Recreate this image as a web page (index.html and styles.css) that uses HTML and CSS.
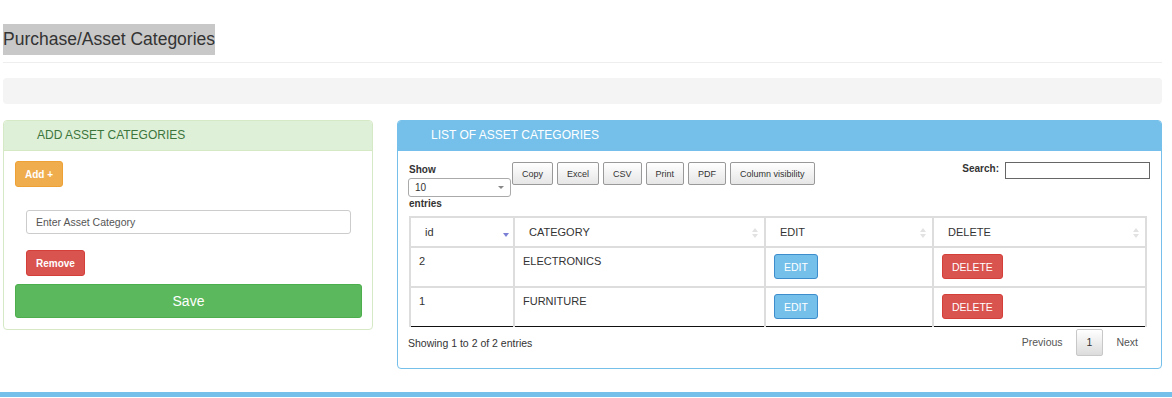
FILE: index.html
```html
<!DOCTYPE html>
<html lang="en">
<head>
    <meta charset="UTF-8">
    <meta name="viewport" content="width=device-width, initial-scale=1.0">
    <title>Purchase/Asset Categories</title>
    <link rel="stylesheet" href="styles.css">
</head>
<body>
    <div class="page">
        <h1 class="page-title"><span>Purchase/Asset Categories</span></h1>
        <hr class="divider">
        <div class="well"></div>

        <div class="panels">
            <div class="panel panel-success">
                <div class="panel-heading">ADD ASSET CATEGORIES</div>
                <div class="panel-body">
                    <button class="btn btn-warning btn-small">Add +</button>
                    <div class="field-group">
                        <input type="text" class="form-input" placeholder="Enter Asset Category">
                        <button class="btn btn-danger btn-small">Remove</button>
                    </div>
                    <button class="btn btn-success btn-block">Save</button>
                </div>
            </div>

            <div class="panel panel-info">
                <div class="panel-heading">LIST OF ASSET CATEGORIES</div>
                <div class="panel-body">
                    <div class="dt-toolbar">
                        <div class="dt-length">
                            <label>Show</label>
                            <div class="select-box">10 <span class="caret"></span></div>
                            <label>entries</label>
                        </div>
                        <div class="dt-buttons">
                            <button class="dt-button">Copy</button>
                            <button class="dt-button">Excel</button>
                            <button class="dt-button">CSV</button>
                            <button class="dt-button">Print</button>
                            <button class="dt-button">PDF</button>
                            <button class="dt-button">Column visibility</button>
                        </div>
                        <div class="dt-search">
                            <label>Search:</label>
                            <input type="search" class="search-input">
                        </div>
                    </div>

                    <table class="dt-table">
                        <thead>
                            <tr>
                                <th class="col-id"><div class="th-inner">id <span class="sort-desc"></span></div></th>
                                <th class="col-cat"><div class="th-inner">CATEGORY <span class="sort-both"></span></div></th>
                                <th class="col-edit"><div class="th-inner">EDIT <span class="sort-both"></span></div></th>
                                <th class="col-del"><div class="th-inner">DELETE <span class="sort-both"></span></div></th>
                            </tr>
                        </thead>
                        <tbody>
                            <tr>
                                <td>2</td>
                                <td>ELECTRONICS</td>
                                <td><button class="btn btn-info btn-row">EDIT</button></td>
                                <td><button class="btn btn-danger btn-row">DELETE</button></td>
                            </tr>
                            <tr>
                                <td>1</td>
                                <td>FURNITURE</td>
                                <td><button class="btn btn-info btn-row">EDIT</button></td>
                                <td><button class="btn btn-danger btn-row">DELETE</button></td>
                            </tr>
                        </tbody>
                    </table>

                    <div class="dt-footer">
                        <div class="dt-info">Showing 1 to 2 of 2 entries</div>
                        <div class="pagination">
                            <span class="page-link">Previous</span>
                            <span class="page-link current">1</span>
                            <span class="page-link">Next</span>
                        </div>
                    </div>
                </div>
            </div>
        </div>
    </div>
    <div class="footer-bar"></div>
</body>
</html>
```

FILE: styles.css
```css
:root {
    --info: #74c0ea;
    --info-border: #3d8ccc;
    --danger: #d9534f;
    --text: #333;
}

body {
    margin: 0;
    font-family: 'Liberation Sans', Arial, sans-serif;
    font-size: 10.5px;
    color: var(--text);
    background: #fff;
}

.page {
    padding: 0 10px 0 3px;
}

.page-title {
    margin: 24px 0 0;
    font-size: 17.5px;
    font-weight: normal;
    line-height: 31px;
    height: 31px;
}

.page-title span {
    display: inline-block;
    background: #c8c8c8;
    color: #333;
}

.divider {
    margin: 7px 0 0;
    border: 0;
    border-top: 1px solid #eee;
}

.well {
    margin-top: 15px;
    height: 26px;
    background: #f4f4f4;
    border-radius: 4px;
}

.panels {
    display: flex;
    align-items: flex-start;
    gap: 24px;
    margin-top: 16px;
}

.panel {
    border: 1px solid;
    border-radius: 4px;
    background: #fff;
}

.panel-heading {
    height: 29px;
    line-height: 29px;
    padding-left: 33px;
    font-size: 12px;
    border-bottom: 1px solid;
    border-radius: 3px 3px 0 0;
}

.panel-success {
    width: 368px;
    border-color: #d6e9c6;
}

.panel-success .panel-heading {
    background: #dff0d8;
    color: #3c763d;
    border-color: #d6e9c6;
}

.panel-info {
    flex: 1;
    border-color: var(--info);
}

.panel-info .panel-heading {
    background: var(--info);
    color: #fff;
    border-color: var(--info);
}

.panel-success .panel-body {
    padding: 10px 10px 11px 11px;
}

.panel-info .panel-body {
    padding: 11px 12px 12px 11px;
}

.btn {
    display: inline-block;
    font-family: inherit;
    border: 1px solid transparent;
    border-radius: 3px;
    color: #fff;
    cursor: pointer;
    padding: 0;
}

.btn-small {
    height: 26px;
    padding: 0 9px;
    font-size: 10px;
    font-weight: bold;
}

.btn-warning {
    background: #f0ad4e;
    border-color: #eea236;
}

.btn-danger {
    background: var(--danger);
    border-color: #d43f3a;
}

.btn-success {
    background: #5cb85c;
    border-color: #4cae4c;
}

.btn-info {
    background: var(--info);
    border-color: var(--info-border);
}

.btn-block {
    display: block;
    width: 100%;
    height: 34px;
    font-size: 14px;
}

.field-group {
    padding: 23px 11px 8px;
}

.form-input {
    display: block;
    box-sizing: border-box;
    width: 100%;
    height: 24px;
    padding: 0 9px;
    font-family: inherit;
    font-size: 10.5px;
    color: #555;
    border: 1px solid #ccc;
    border-radius: 3px;
    margin-bottom: 16px;
}

.form-input::placeholder {
    color: #555;
}

/* datatable toolbar */
.dt-toolbar {
    display: flex;
    align-items: flex-start;
}

.dt-length {
    width: 102px;
    padding-top: 2px;
}

.dt-length label {
    display: block;
    font-size: 10px;
    font-weight: bold;
    line-height: 12px;
}

.select-box {
    box-sizing: border-box;
    height: 19px;
    margin: 2px 0 1px -1px;
    padding: 0 6px;
    line-height: 18px;
    font-size: 10px;
    border: 1px solid #aaa;
    border-radius: 3px;
    display: flex;
    justify-content: space-between;
    align-items: center;
}

.caret {
    width: 0;
    height: 0;
    border-left: 3px solid transparent;
    border-right: 3px solid transparent;
    border-top: 3px solid #888;
}

.dt-buttons {
    display: flex;
    gap: 4px;
    margin-left: 1px;
}

.dt-button {
    height: 23px;
    padding: 0 9px;
    font-family: inherit;
    font-size: 9px;
    color: #333;
    background: linear-gradient(#fff, #e6e6e6);
    border: 1px solid #999;
    border-radius: 2px;
}

.dt-search {
    margin-left: auto;
    display: flex;
    align-items: flex-start;
    gap: 6px;
}

.dt-search label {
    font-size: 10px;
    font-weight: bold;
    line-height: 14px;
}

.search-input {
    box-sizing: border-box;
    width: 145px;
    height: 17px;
    margin: 0 -1px 0 0;
    border: 1px solid #666;
    padding: 0 3px;
}

/* table */
.dt-table {
    width: 738px;
    margin-top: 6px;
    border-collapse: collapse;
    font-size: 11px;
}

.dt-table th,
.dt-table td {
    border: 2px solid #ddd;
    text-align: left;
}

.dt-table th {
    font-weight: normal;
    padding: 7px 4px 6px 14px;
    line-height: 15px;
    border-bottom: 1px solid #111;
}

.dt-table td {
    padding: 6px 7px 6px 8px;
    line-height: 15px;
    vertical-align: top;
    height: 26px;
}

.dt-table tbody tr:last-child td {
    border-bottom: 1px solid #111;
}

.col-id { width: 84px; }
.col-cat { width: 231px; }
.col-edit { width: 148px; }

.th-inner {
    display: flex;
    justify-content: space-between;
    align-items: center;
}

.sort-desc {
    width: 0;
    height: 0;
    border-left: 3px solid transparent;
    border-right: 3px solid transparent;
    border-top: 4px solid #7b80d6;
    margin-top: 4px;
}

.sort-both {
    position: relative;
    width: 6px;
    height: 10px;
    margin-right: 2px;
}

.sort-both::before,
.sort-both::after {
    content: "";
    position: absolute;
    left: 0;
    width: 0;
    height: 0;
    border-left: 3px solid transparent;
    border-right: 3px solid transparent;
}

.sort-both::before {
    top: 0;
    border-bottom: 4px solid #e2e2e2;
}

.sort-both::after {
    bottom: 0;
    border-top: 4px solid #e2e2e2;
}

.btn-row {
    height: 25px;
    padding: 0 9px;
    font-size: 10.5px;
}

.dt-footer {
    display: flex;
    justify-content: space-between;
    align-items: center;
    margin-top: 2px;
}

.dt-info {
    font-size: 10.5px;
    margin-left: -1px;
}

.pagination {
    display: flex;
    margin-right: -2px;
}

.page-link {
    box-sizing: border-box;
    height: 27px;
    line-height: 25px;
    padding: 0 12px;
    border: 1px solid transparent;
    color: #555;
    font-size: 10.5px;
}

.page-link.current {
    padding: 0 10px;
    color: #333;
    background: linear-gradient(#fff, #dcdcdc);
    border-color: #c8c8c8;
    border-radius: 2px;
}

.footer-bar {
    margin-top: 23px;
    height: 5px;
    background: var(--info);
}
```
